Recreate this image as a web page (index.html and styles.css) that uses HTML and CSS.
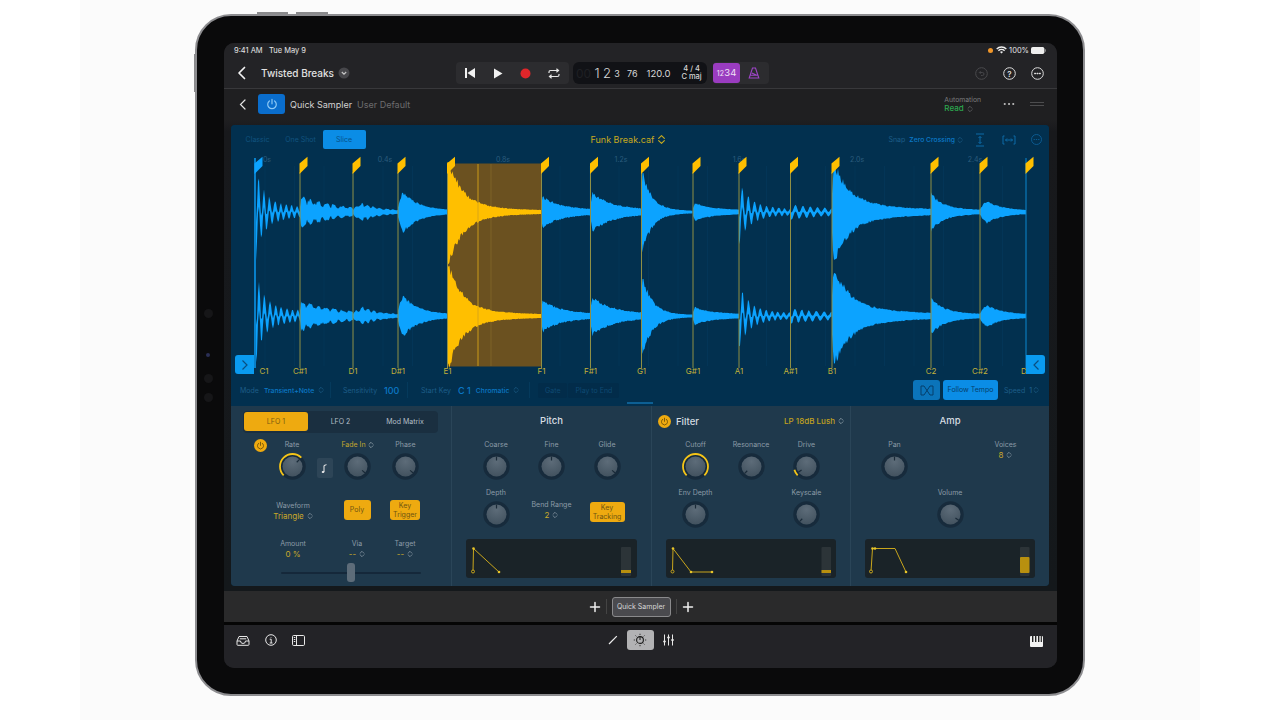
FILE: index.html
```html
<!DOCTYPE html>
<html lang="en">
  <head>
    <meta charset="UTF-8" />
    <title>Quick Sampler</title>
    <link rel="stylesheet" href="styles.css">
  </head>
  <body>
    <svg class="defs" width="0" height="0">
      <defs>
        <radialGradient id="face" cx="50%" cy="25%" r="85%">
          <stop offset="0" stop-color="#5d6c79" />
          <stop offset="1" stop-color="#3f4f5c" />
        </radialGradient>
        <symbol id="knob" viewBox="0 0 27 27">
          <circle cx="13.5" cy="13.5" r="12" fill="#172b3c" stroke="#172b3c" stroke-width="2.5" />
          <circle cx="13.5" cy="13.5" r="10" fill="url(#face)" />
        </symbol>
        <symbol id="power" viewBox="0 0 14 14">
          <path d="M4.4 3.9a4.3 4.3 0 1 0 5.2 0M7 2.4v4.4" fill="none" stroke="currentColor" stroke-width="1.2" stroke-linecap="round" />
        </symbol>
        <symbol id="updown" viewBox="0 0 8 10">
          <path d="M1.4 4 4 1.4 6.6 4M1.4 6 4 8.6 6.6 6" fill="none" stroke="currentColor" stroke-width="1" stroke-linecap="round" stroke-linejoin="round" />
        </symbol>
        <symbol id="plus" viewBox="0 0 12 12">
          <path d="M6 1.5v9M1.5 6h9" stroke="currentColor" stroke-width="1.5" stroke-linecap="round" />
        </symbol>
      </defs>
    </svg>

    <div class="stage">
      <div class="ipad">
        <i class="hw-btn hw-top-a"></i>
        <i class="hw-btn hw-top-b"></i>
        <i class="hw-btn hw-side"></i>
        <i class="cam cam-a"></i>
        <i class="cam cam-b"></i>
        <i class="cam cam-c"></i>
        <i class="cam cam-d"></i>

        <div class="screen">
          <div class="statusbar">
            <span>9:41 AM&nbsp;&nbsp; Tue May 9</span>
            <span class="status-right">
              <i class="dot"></i>
              <svg width="11" height="8" viewBox="0 0 11 8"><path d="M5.5 7.6 7 6a2.2 2.2 0 0 0-3 0zM2.9 5.2a3.7 3.7 0 0 1 5.2 0l1-1a5.1 5.1 0 0 0-7.2 0zM1.2 3.4a6.1 6.1 0 0 1 8.6 0l1-1a7.5 7.5 0 0 0-10.6 0z" fill="#eee" /></svg>
              <span>100%</span>
              <svg width="15" height="7" viewBox="0 0 15 7"><rect width="13.4" height="7" rx="1.8" fill="#eee" /><rect x="13.8" y="2.3" width="1" height="2.4" fill="#999" /></svg>
            </span>
          </div>

          <div class="toolbar">
            <svg class="back" width="10" height="14" viewBox="0 0 10 14"><path d="M7.5 1.5 2 7l5.5 5.5" fill="none" stroke="#f2f2f2" stroke-width="1.7" stroke-linecap="round" stroke-linejoin="round" /></svg>
            <span class="song">Twisted Breaks</span>
            <svg class="song-more" width="12" height="12" viewBox="0 0 12 12"><circle cx="6" cy="6" r="5.5" fill="#47474b" /><path d="M3.8 5 6 7.2 8.2 5" fill="none" stroke="#c8c8c8" stroke-width="1.1" /></svg>

            <div class="transport">
              <svg width="12" height="10" viewBox="0 0 12 10"><path d="M1 0h2v10H1zM11 0v10L3.4 5z" fill="#f2f2f2" /></svg>
              <svg width="10" height="11" viewBox="0 0 10 11"><path d="M1 0.5v10l8.5-5z" fill="#f2f2f2" /></svg>
              <svg width="11" height="11" viewBox="0 0 11 11"><circle cx="5.5" cy="5.5" r="5" fill="#e0262a" /></svg>
              <svg width="12" height="11" viewBox="0 0 12 11"><path d="M1 5V4a1.5 1.5 0 0 1 1.5-1.500H10M8.400.8 10.500 2.500 8.400 4.200M11 6v1a1.500 1.500 0 0 1-1.500 1.500H2M3.600 6.800 1.500 8.500l2.100 1.700" fill="none" stroke="#e6e6e6" stroke-width="1.200" /></svg>
            </div>

            <div class="lcd">
              <span class="lcd-off">00</span>
              <span class="lcd-big">1</span>
              <span class="lcd-big">2</span>
              <span class="lcd-small">3</span>
              <span class="lcd-num lcd-76">76</span>
              <span class="lcd-num lcd-tempo">120.0</span>
              <span class="lcd-sig"><b>4 / 4</b><b>C maj</b></span>
            </div>

            <div class="count">
              <span class="count-on"><small>12</small>34</span>
              <svg class="metro" width="12" height="12" viewBox="0 0 12 12"><path d="M4.500 1h3L10.800 11H1.200zM2.400 8.300h7.200M3.800 6 8.800 8.300" fill="none" stroke="#9d45c7" stroke-width="1.100" /></svg>
            </div>

            <div class="tool-right">
              <svg width="13" height="13" viewBox="0 0 13 13"><circle cx="6.500" cy="6.500" r="5.800" fill="none" stroke="#4a4a4d" /><path d="M4.500 5.500h3a1.500 1.500 0 0 1 0 3H6M5.600 4.200 4.300 5.500l1.300 1.300" fill="none" stroke="#4a4a4d" stroke-width=".9" /></svg>
              <svg width="13" height="13" viewBox="0 0 13 13"><circle cx="6.500" cy="6.500" r="5.800" fill="none" stroke="#ddd" /><text x="6.500" y="9.500" class="svg-q">?</text></svg>
              <svg width="13" height="13" viewBox="0 0 13 13"><circle cx="6.500" cy="6.500" r="5.800" fill="none" stroke="#ddd" /><path d="M3.700 6.500h.8M6.100 6.500h.8M8.500 6.500h.8" stroke="#ddd" stroke-width="1.300" stroke-linecap="round" /></svg>
            </div>
          </div>

          <div class="plug-head">
            <svg class="plug-back" width="8" height="11" viewBox="0 0 8 11"><path d="M6 1 1.500 5.500 6 10" fill="none" stroke="#e4e4e4" stroke-width="1.200" stroke-linecap="round" /></svg>
            <span class="plug-power"><svg width="14" height="14"><use href="#power" /></svg></span>
            <span class="plug-name">Quick Sampler</span>
            <span class="plug-preset">User Default</span>
            <div class="automation">
              <span>Automation</span>
              <span class="auto-read">Read <svg width="6" height="8"><use href="#updown" /></svg></span>
            </div>
            <svg class="plug-more" width="12" height="4" viewBox="0 0 12 4"><path d="M1.500 2h.5M5.800 2h.5M10 2h.5" stroke="#eee" stroke-width="1.600" stroke-linecap="round" /></svg>
            <span class="plug-grip"></span>
          </div>

          <div class="plugin-wrap">
            <div class="plugin">
              <div class="wave-section">
                <div class="wave-top">
                  <span class="seg">Classic</span>
                  <span class="seg">One Shot</span>
                  <span class="seg seg-on">Slice</span>
                  <span class="file">Funk Break.caf <svg width="9" height="11"><use href="#updown" /></svg></span>
                  <div class="wave-tools">
                    <span class="dim">Snap</span>
                    <span class="blue">Zero Crossing</span>
                    <svg class="dim" width="6" height="8"><use href="#updown" /></svg>
                    <svg class="tool-fit" width="12" height="14" viewBox="0 0 12 14"><path d="M2 1h8M2 13h8M6 3.500v7M4.500 5 6 3.500 7.500 5M4.500 9 6 10.500 7.500 9" fill="none" stroke="#0d6ba8" stroke-width="1" /></svg>
                    <svg class="tool-zoom" width="14" height="10" viewBox="0 0 14 10"><path d="M2.500 1H1v8h1.500M11.500 1H13v8h-1.500M3.500 5h7M5 3.500 3.500 5 5 6.500M9 3.500 10.500 5 9 6.500" fill="none" stroke="#0d6ba8" stroke-width="1" /></svg>
                    <svg class="tool-more" width="11" height="11" viewBox="0 0 11 11"><circle cx="5.500" cy="5.500" r="5" fill="none" stroke="#0c5a90" /><path d="M3 5.500h.5M5.250 5.500h.5M7.500 5.500H8" stroke="#0c5a90" stroke-linecap="round" /></svg>
                  </div>
                </div>

                <div class="wave-canvas">
                  <svg id="wave" class="wave" width="818" height="224" viewBox="231 154 818 224"></svg>
                  <span class="handle handle-l"><svg width="8" height="12" viewBox="0 0 8 12"><path d="M1.500 1.500 6 6l-4.500 4.500" fill="none" stroke="#0a4f80" stroke-width="1.200" /></svg></span>
                  <span class="handle handle-r"><svg width="8" height="12" viewBox="0 0 8 12"><path d="M6.500 1.500 2 6l4.500 4.500" fill="none" stroke="#0a4f80" stroke-width="1.200" /></svg></span>
                </div>

                <div class="wave-opts">
                  <div class="opt opt-mode"><span class="dim">Mode</span><span class="blue">Transient+Note</span><svg class="dim" width="6" height="8"><use href="#updown" /></svg></div>
                  <div class="opt opt-sens"><span class="dim">Sensitivity</span><span class="blue big">100</span></div>
                  <div class="opt opt-key"><span class="dim">Start Key</span><span class="blue big">C 1</span><span class="blue chrom">Chromatic</span><svg class="dim" width="6" height="8"><use href="#updown" /></svg></div>
                  <div class="opt opt-gate"><span class="off-btn">Gate</span><span class="off-btn">Play to End</span></div>
                  <div class="opt-right">
                    <span class="tempo-icon"><svg width="14" height="11" viewBox="0 0 14 11"><path d="M4 1H1v9h3L10 1h3v9h-3z" fill="none" stroke="#063f6a" stroke-width="1" /></svg></span>
                    <span class="tempo-btn">Follow Tempo</span>
                    <span class="dim speed">Speed <b>1</b></span>
                    <svg class="dim" width="6" height="8"><use href="#updown" /></svg>
                  </div>
                </div>
                <div class="wave-scroll"><i></i></div>
              </div>

              <div class="lower">
                <section class="sec sec-lfo">
                  <div class="tabs">
                    <span class="tab tab-on">LFO 1</span>
                    <span class="tab">LFO 2</span>
                    <span class="tab">Mod Matrix</span>
                  </div>
                  <div class="lfo-row1">
                    <svg class="pow-small" width="13" height="13"><circle cx="6.500" cy="6.500" r="6.500" fill="#eeaa10" /><use href="#power" x="1.500" y="1.500" width="10" height="10" class="pow-glyph" /></svg>
                    <div class="cell">
                      <span class="lbl">Rate</span>
                      <svg class="knob" viewBox="0 0 27 27"><use href="#knob" /><path class="arc" d="M4.660 22.340A12.500 12.500 0 0 1 22.340 4.660" /><path class="tick" transform="rotate(45 13.500 13.500)" d="M13.500 3.500v4" /></svg>
                    </div>
                    <span class="note-btn"><svg width="8" height="11" viewBox="0 0 8 11"><path d="M3 9V2.500l2.500-.8" fill="none" stroke="#eee" /><ellipse cx="2" cy="9" rx="1.300" ry="1" fill="#eee" /></svg></span>
                    <div class="cell">
                      <span class="lbl lbl-gold">Fade In <svg class="lbl-ud" width="6" height="8"><use href="#updown" /></svg></span>
                      <svg class="knob" viewBox="0 0 27 27"><use href="#knob" /><path class="tick" transform="rotate(130 13.500 13.500)" d="M13.500 3.500v4" /></svg>
                    </div>
                    <div class="cell">
                      <span class="lbl">Phase</span>
                      <svg class="knob" viewBox="0 0 27 27"><use href="#knob" /><path class="tick" transform="rotate(130 13.500 13.500)" d="M13.500 3.500v4" /></svg>
                    </div>
                  </div>
                  <div class="lfo-row2">
                    <div class="pick pick-wave"><span class="lbl">Waveform</span><span class="val">Triangle <svg width="6" height="8"><use href="#updown" /></svg></span></div>
                    <div class="col-b"><span class="gold-btn gold-poly">Poly</span></div>
                    <div class="col-c"><span class="gold-btn gold-trig">Key<br>Trigger</span></div>
                  </div>
                  <div class="lfo-row3">
                    <div class="pick pick-amount"><span class="lbl">Amount</span><span class="val">0 %</span></div>
                    <div class="pick col-b"><span class="lbl">Via</span><span class="val">-- <svg width="6" height="8"><use href="#updown" /></svg></span></div>
                    <div class="pick col-c"><span class="lbl">Target</span><span class="val">-- <svg width="6" height="8"><use href="#updown" /></svg></span></div>
                  </div>
                  <div class="slider"><i></i></div>
                </section>

                <section class="sec">
                  <h3 class="sec-title">Pitch</h3>
                  <div class="knob-grid">
                    <div class="cell"><span class="lbl">Coarse</span><svg class="knob" viewBox="0 0 27 27"><use href="#knob" /><path class="tick" d="M13.500 3.500v4" /></svg></div>
                    <div class="cell"><span class="lbl">Fine</span><svg class="knob" viewBox="0 0 27 27"><use href="#knob" /><path class="tick" d="M13.500 3.500v4" /></svg></div>
                    <div class="cell"><span class="lbl">Glide</span><svg class="knob" viewBox="0 0 27 27"><use href="#knob" /><path class="tick" transform="rotate(130 13.500 13.500)" d="M13.500 3.500v4" /></svg></div>
                    <div class="cell"><span class="lbl">Depth</span><svg class="knob" viewBox="0 0 27 27"><use href="#knob" /><path class="tick" d="M13.500 3.500v4" /></svg></div>
                    <div class="pick pick-bend"><span class="lbl">Bend Range</span><span class="val">2 <svg width="6" height="8"><use href="#updown" /></svg></span></div>
                    <span class="gold-btn gold-track">Key<br>Tracking</span>
                  </div>
                  <svg class="env" width="171" height="39" viewBox="0 0 171 39">
                    <path class="env-line" d="M7 32.500 7.500 9.500 33 33" />
                    <circle class="env-hollow" cx="7" cy="32.500" r="1.500" /><circle class="env-dot" cx="7.500" cy="9.500" r="1.300" /><circle class="env-dot" cx="33" cy="33" r="1.300" />
                    <rect class="env-meter" x="155" y="8" width="10" height="29" rx="1" /><rect class="env-level" x="155" y="31" width="10" height="3" />
                  </svg>
                </section>

                <section class="sec">
                  <div class="filter-head">
                    <svg class="pow-small" width="13" height="13"><circle cx="6.500" cy="6.500" r="6.500" fill="#eeaa10" /><use href="#power" x="1.500" y="1.500" width="10" height="10" class="pow-glyph" /></svg>
                    <span class="filter-title">Filter</span>
                    <span class="filter-type">LP 18dB Lush <svg width="6" height="8"><use href="#updown" /></svg></span>
                  </div>
                  <div class="knob-grid">
                    <div class="cell"><span class="lbl">Cutoff</span><svg class="knob" viewBox="0 0 27 27"><use href="#knob" /><path class="arc" d="M4.660 22.340A12.500 12.500 0 1 1 22.340 22.340" /></svg></div>
                    <div class="cell"><span class="lbl">Resonance</span><svg class="knob" viewBox="0 0 27 27"><use href="#knob" /><path class="tick" transform="rotate(-135 13.500 13.500)" d="M13.500 3.500v4" /></svg></div>
                    <div class="cell"><span class="lbl">Drive</span><svg class="knob" viewBox="0 0 27 27"><use href="#knob" /><path class="arc" d="M4.660 22.340A12.500 12.500 0 0 1 1.430 16.740" /><path class="tick" transform="rotate(-125 13.500 13.500)" d="M13.500 3.500v4" /></svg></div>
                    <div class="cell"><span class="lbl">Env Depth</span><svg class="knob" viewBox="0 0 27 27"><use href="#knob" /><path class="tick" d="M13.500 3.500v4" /></svg></div>
                    <span></span>
                    <div class="cell"><span class="lbl">Keyscale</span><svg class="knob" viewBox="0 0 27 27"><use href="#knob" /><path class="tick" transform="rotate(-135 13.500 13.500)" d="M13.500 3.500v4" /></svg></div>
                  </div>
                  <svg class="env" width="170" height="39" viewBox="0 0 170 39">
                    <path class="env-line" d="M6.500 32.500 7 9.500 25 33H46" />
                    <circle class="env-hollow" cx="6.500" cy="32.500" r="1.500" /><circle class="env-dot" cx="7" cy="9.500" r="1.300" /><circle class="env-dot" cx="25" cy="33" r="1.300" /><circle class="env-dot" cx="46" cy="33" r="1.300" />
                    <rect class="env-meter" x="155.500" y="8" width="9.500" height="29" rx="1" /><rect class="env-level" x="155.500" y="31" width="9.500" height="3" />
                  </svg>
                </section>

                <section class="sec">
                  <h3 class="sec-title">Amp</h3>
                  <div class="knob-grid">
                    <div class="cell"><span class="lbl">Pan</span><svg class="knob" viewBox="0 0 27 27"><use href="#knob" /><path class="tick" d="M13.500 3.500v4" /></svg></div>
                    <span></span>
                    <div class="pick pick-voices"><span class="lbl">Voices</span><span class="val">8 <svg width="6" height="8"><use href="#updown" /></svg></span></div>
                    <span></span>
                    <div class="cell"><span class="lbl">Volume</span><svg class="knob" viewBox="0 0 27 27"><use href="#knob" /><path class="tick" transform="rotate(125 13.500 13.500)" d="M13.500 3.500v4" /></svg></div>
                  </div>
                  <svg class="env" width="170" height="39" viewBox="0 0 170 39">
                    <path class="env-line" d="M6 32.500 7.500 9.500H30L41 33" />
                    <circle class="env-hollow" cx="6" cy="32.500" r="1.500" /><circle class="env-dot" cx="7.500" cy="9.500" r="1.300" /><circle class="env-dot" cx="10" cy="9.500" r="1.300" /><circle class="env-dot" cx="41" cy="33" r="1.300" />
                    <rect class="env-meter" x="155" y="8" width="9.500" height="29" rx="1" /><rect class="env-amp" x="155" y="18" width="9.500" height="16" rx="1" />
                  </svg>
                </section>
              </div>
            </div>
          </div>

          <div class="strip">
            <svg class="strip-plus" width="12" height="12"><use href="#plus" /></svg>
            <i class="strip-sep"></i>
            <span class="slot">Quick Sampler</span>
            <i class="strip-sep"></i>
            <svg class="strip-plus" width="12" height="12"><use href="#plus" /></svg>
          </div>

          <div class="bottombar">
            <div class="bb-left">
              <svg width="14" height="11" viewBox="0 0 14 11"><path d="M1 6 3 1.500h8L13 6v3.500a.8.8 0 0 1-.8.800H1.800a.8.8 0 0 1-.8-.800zM1 6h3.500a2.500 2.500 0 0 0 5 0H13M3.800 3.800h6.400" fill="none" stroke="#e8e8e8" stroke-width="1" /></svg>
              <svg width="12" height="12" viewBox="0 0 12 12"><circle cx="6" cy="6" r="5.300" fill="none" stroke="#e8e8e8" /><path d="M4.700 5.200H6.200V9M4.700 9H7.500M6 3v.6" fill="none" stroke="#e8e8e8" /></svg>
              <svg width="13" height="11" viewBox="0 0 13 11"><rect x=".5" y=".5" width="12" height="10" rx="1.200" fill="none" stroke="#e8e8e8" /><path d="M4.500 .5v10" stroke="#e8e8e8" /><path d="M1.800 2.500h1.500M1.800 4.500h1.500M1.800 6.500h1.500" stroke="#e8e8e8" /></svg>
            </div>
            <div class="bb-mid">
              <svg class="bb-pen" width="10" height="10" viewBox="0 0 10 10"><path d="M1 9 8.800 1.200" stroke="#eee" stroke-width="1.200" /></svg>
              <span class="bb-active"><svg width="14" height="14" viewBox="0 0 14 14"><circle cx="7" cy="7" r="3.400" fill="none" stroke="#1a1a1a" stroke-width="1.100" /><path d="M7 7V3.500M7 .8v1M7 12.200v1M.8 7h1M12.200 7h1M2.600 2.600l.7.700M10.700 10.700l.7.700M2.600 11.400l.7-.7M10.700 3.300l.7-.7" stroke="#1a1a1a" stroke-width="1" /></svg></span>
              <svg class="bb-mix" width="11" height="12" viewBox="0 0 11 12"><path d="M1.500 .5v11M5.500 .5v11M9.500 .5v11" stroke="#e8e8e8" /><path d="M.2 7.500h2.600M4.200 3.500h2.600M8.200 6h2.600" stroke="#e8e8e8" stroke-width="1.600" /></svg>
            </div>
            <svg class="bb-piano" width="13" height="11" viewBox="0 0 13 11"><rect width="13" height="11" rx="1" fill="#f2f2f2" /><path d="M2 0h1.400v6H2zM5 0h1.400v6H5zM8 0h1.400v6H8zM10.700 0h1.200v6h-1.200z" fill="#222" /></svg>
          </div>
        </div>
      </div>
    </div>
    <script src="app.js"></script>
  </body>
</html>
```

FILE: styles.css
```css
* {
  margin: 0;
  padding: 0;
  box-sizing: border-box;
}
body {
  background: #fff;
  font-family: Inter, "Noto Sans", sans-serif;
  overflow: hidden;
}
svg {
  display: block;
}
i {
  display: block;
}
.defs {
  position: absolute;
}
.stage {
  width: 1120px;
  height: 720px;
  margin: 0 auto;
  padding: 14px 0 0 115px;
  background: #fbfbfb;
}
.ipad {
  position: relative;
  width: 890px;
  height: 682px;
  padding: 27px;
  border: 2px solid #8d8d90;
  border-radius: 36px;
  background: #0a0a0b;
}
.hw-btn {
  position: absolute;
  background: #8a8a8c;
}
.hw-top-a {
  top: -4px;
  left: 60px;
  width: 31px;
  height: 2px;
}
.hw-top-b {
  top: -4px;
  left: 99px;
  width: 32px;
  height: 2px;
}
.hw-side {
  top: 38px;
  left: -3px;
  width: 1px;
  height: 38px;
}
.cam {
  position: absolute;
  left: 7px;
  width: 9px;
  height: 9px;
  border-radius: 50%;
  background: #161618;
}
.cam-a { top: 293px; }
.cam-b { top: 337px; left: 9px; width: 4px; height: 4px; background: #2a2f55; }
.cam-c { top: 358px; }
.cam-d { top: 377px; }

.screen {
  display: flex;
  flex-direction: column;
  width: 833px;
  height: 625px;
  border-radius: 10px;
  overflow: hidden;
  background: #1f1f21;
  color: #ddd;
}

/* status + top bars */
.statusbar {
  display: flex;
  justify-content: space-between;
  align-items: center;
  height: 17px;
  padding: 0 11px 3px 10px;
  font-size: 7.5px;
  color: #e6e6e6;
  background: #232326;
}
.status-right {
  display: flex;
  align-items: center;
  gap: 2px;
}
.dot {
  width: 5px;
  height: 5px;
  margin-right: 1px;
  border-radius: 50%;
  background: #f0962a;
}
.toolbar {
  display: flex;
  align-items: center;
  height: 29px;
  padding-bottom: 2px;
  border-bottom: 1px solid #38383b;
  background: #232326;
}
.back {
  margin-left: 13px;
}
.song {
  width: 73px;
  margin-left: 14px;
  font-size: 10px;
  font-weight: 500;
  white-space: nowrap;
  color: #e0e0e0;
}
.song-more {
  margin-left: 4px;
}
.transport {
  display: flex;
  justify-content: space-between;
  align-items: center;
  width: 113px;
  height: 22px;
  margin-left: 106px;
  padding: 0 9px 0 8px;
  border-radius: 4px;
  background: #2c2c2f;
}
.lcd {
  display: flex;
  align-items: center;
  width: 134px;
  height: 22px;
  margin-left: 4px;
  padding-left: 3px;
  border-radius: 6px;
  background: #111216;
  color: #d8d8d8;
}
.lcd-off {
  width: 16px;
  font-size: 12px;
  color: #1f2024;
}
.lcd-big {
  width: 10px;
  font-size: 13px;
  font-weight: 300;
  text-align: center;
}
.lcd-small {
  width: 10px;
  font-size: 9px;
  text-align: center;
}
.lcd-num {
  font-size: 9px;
}
.lcd-76 {
  margin-left: 5px;
}
.lcd-tempo {
  margin-left: 9px;
  font-size: 9.5px;
}
.lcd-sig {
  display: flex;
  flex-direction: column;
  align-items: center;
  margin-left: 11px;
  font-size: 7.5px;
  line-height: 8px;
}
.lcd-sig b {
  font-weight: 500;
}
.count {
  display: flex;
  align-items: center;
  width: 56px;
  height: 22px;
  margin-left: 6px;
  border-radius: 4px;
  background: #2c2c2f;
}
.count-on {
  display: flex;
  align-items: baseline;
  justify-content: center;
  width: 27px;
  height: 20px;
  line-height: 20px;
  border-radius: 3px;
  font-size: 9.5px;
  background: #9a3cc0;
  color: #f0e0f6;
}
.count-on small {
  font-size: 7px;
  letter-spacing: .3px;
}
.metro {
  margin-left: 8px;
}
.tool-right {
  display: flex;
  gap: 15px;
  margin-left: auto;
  margin-right: 13px;
}
.svg-q {
  font-size: 8px;
  font-weight: 600;
  text-anchor: middle;
  fill: #ddd;
}
.plug-head {
  display: flex;
  align-items: center;
  height: 31px;
  padding-bottom: 1px;
  background: #1f1f21;
}
.plug-back {
  margin-left: 15px;
}
.plug-power {
  display: flex;
  align-items: center;
  justify-content: center;
  width: 27px;
  height: 20px;
  margin-left: 11px;
  border-radius: 3px;
  color: #8cc8f5;
  background: #0a6dcc;
}
.plug-name {
  margin-left: 5px;
  font-size: 9px;
  color: #d2d2d2;
}
.plug-preset {
  margin-left: 5px;
  font-size: 9px;
  color: #6c6c6e;
}
.automation {
  display: flex;
  flex-direction: column;
  margin: 0 1px 0 auto;
  font-size: 6.8px;
  line-height: 9px;
  color: #7c7c7e;
}
.auto-read {
  display: flex;
  align-items: center;
  gap: 3px;
  font-size: 8px;
  font-weight: 500;
  color: #2ca64f;
}
.auto-read svg {
  color: #6a6a6c;
}
.plug-more {
  margin-left: 21px;
}
.plug-grip {
  width: 14px;
  height: 4px;
  margin: 0 13px 0 15px;
  border-top: 1px solid #4c4c4e;
  border-bottom: 1px solid #4c4c4e;
}

/* plugin panel */
.plugin-wrap {
  padding: 5px 8px 5px 7px;
  background: linear-gradient(#1f1f21, #18191c 12px, #14181b);
}
.plugin {
  height: 461px;
  border-radius: 4px;
  overflow: hidden;
  background: #02304f;
}
.wave-section {
  height: 281px;
  font-size: 7px;
  background: #02304f;
}
.wave-top {
  display: flex;
  align-items: flex-start;
  height: 29px;
  padding: 5px 0 0 5px;
}
.seg {
  width: 43px;
  height: 19px;
  line-height: 19px;
  text-align: center;
  color: #11537f;
}
.seg-on {
  margin-left: .5px;
  border-radius: 2px;
  color: #06528a;
  background: #0b8de6;
}
.file {
  display: flex;
  align-items: center;
  gap: 3px;
  height: 19px;
  margin-left: 225px;
  font-size: 9px;
  color: #c8aa1e;
}
.wave-tools {
  display: flex;
  align-items: center;
  height: 19px;
  margin-left: auto;
  padding-right: 7px;
}
.dim {
  color: #1d5d88;
}
.blue {
  font-size: 6.8px;
  font-weight: 500;
  color: #0b78c6;
}
.wave-tools .blue {
  margin-left: 4px;
}
.wave-tools svg.dim {
  margin-left: 2px;
}
.tool-fit {
  margin-left: 11px;
}
.tool-zoom {
  margin-left: 16px;
}
.tool-more {
  margin-left: 15px;
}
.wave-canvas {
  position: relative;
  height: 224px;
}
.wave text {
  font-family: Inter, "Noto Sans", sans-serif;
  text-anchor: middle;
}
.note {
  font-size: 8px;
  fill: #c2b03a;
}
.ruler {
  font-size: 7px;
  fill: #2b5c7d;
}
.handle {
  position: absolute;
  top: 201px;
  display: flex;
  align-items: center;
  justify-content: center;
  width: 19px;
  height: 19px;
  background: #0a9bf0;
}
.handle-l {
  left: 4px;
  border-radius: 3px 0 0 3px;
}
.handle-r {
  right: 4px;
  border-radius: 0 3px 3px 0;
}
.wave-opts {
  display: flex;
  align-items: center;
  height: 24px;
}
.opt {
  display: flex;
  align-items: center;
  height: 16px;
  border-right: 1px solid #053a5c;
}
.opt-mode {
  width: 100px;
  padding-left: 9px;
}
.opt-mode .blue {
  margin: 0 4px 0 5px;
}
.opt-sens {
  width: 77px;
  padding-left: 12px;
}
.big {
  font-size: 9px;
  margin-left: 7px;
}
.opt-key {
  width: 122px;
  padding-left: 13px;
}
.chrom {
  margin: 0 4px 0 5px;
}
.opt-gate {
  border: 0;
  gap: 1px;
  padding-left: 8px;
}
.off-btn {
  padding: 3px 7px;
  color: #0e4a73;
  background: #022c4a;
  border-radius: 2px;
  white-space: nowrap;
}
.opt-right {
  display: flex;
  align-items: center;
  margin-left: auto;
  padding-right: 10px;
}
.tempo-icon {
  display: flex;
  align-items: center;
  justify-content: center;
  width: 27px;
  height: 20px;
  border-radius: 3px;
  background: #0b74ba;
}
.tempo-btn {
  width: 55px;
  height: 20px;
  margin-left: 3px;
  line-height: 20px;
  text-align: center;
  border-radius: 3px;
  color: #063f6a;
  background: #0b8de6;
}
.speed {
  width: 29px;
  margin-left: 6px;
  white-space: nowrap;
}
.speed b {
  margin-left: 2px;
  font-weight: 500;
}
.wave-scroll {
  height: 4px;
}
.wave-scroll i {
  width: 26px;
  height: 2px;
  margin-left: 396px;
  background: #0d5f93;
}

/* lower panel */
.lower {
  display: grid;
  grid-template-columns: 220px 200px 199px 199px;
  height: 180px;
  background: #1f394c;
  font-size: 7px;
}
.sec {
  border-left: 1px solid #2a4558;
}
.sec:first-child {
  border-left: 0;
}
.lbl {
  display: block;
  height: 12px;
  line-height: 12px;
  white-space: nowrap;
  color: #8c9ba7;
}
.lbl-gold {
  display: flex;
  align-items: center;
  gap: 2px;
  color: #c2a62c;
}
.lbl-ud {
  color: #9aa8b2;
}
.val {
  display: flex;
  align-items: center;
  justify-content: center;
  gap: 3px;
  height: 11px;
  margin-top: -2px;
  font-size: 8px;
  color: #c9a92a;
}
.val svg {
  color: #8c9ba7;
}
.cell {
  display: flex;
  flex-direction: column;
  align-items: center;
}
.pick {
  display: flex;
  flex-direction: column;
  align-items: center;
}
.knob {
  width: 27px;
  height: 27px;
  margin-top: 2px;
  overflow: visible;
}
.tick {
  fill: none;
  stroke: #1a2a38;
  stroke-width: 1.2;
}
.arc {
  fill: none;
  stroke: #f5c518;
  stroke-width: 1.8;
}
.gold-btn {
  display: block;
  height: 20px;
  border-radius: 3px;
  text-align: center;
  font-size: 7px;
  line-height: 8.5px;
  padding-top: 2px;
  color: #6e5410;
  background: #eeaa10;
}
.tabs {
  display: grid;
  grid-template-columns: 64px 65px 64px;
  width: 195px;
  height: 22px;
  margin: 5px 0 0 12px;
  padding: 1px;
  border-radius: 4px;
  background: #1a2f40;
}
.tab {
  line-height: 19px;
  height: 19px;
  text-align: center;
  color: #b4bfc7;
}
.tab-on {
  border-radius: 3px;
  color: #7a5c10;
  background: #eeaa10;
}
.lfo-row1 {
  display: grid;
  grid-template-columns: 14px 48px 18px 47px 49px;
  height: 42px;
  margin-top: 6px;
  padding-left: 23px;
}
.pow-small {
  color: #6a4e08;
}
.pow-glyph {
  color: #6a4e08;
}
.note-btn {
  display: flex;
  align-items: center;
  justify-content: center;
  align-self: end;
  width: 16px;
  height: 20px;
  margin: 0 0 3px 1px;
  border-radius: 2px;
  background: #2d4557;
}
.lfo-row2 {
  display: grid;
  grid-template-columns: 22px 80px 48px 48px;
  height: 20px;
  margin-top: 19px;
}
.lfo-row3 {
  display: grid;
  grid-template-columns: 22px 80px 48px 48px;
  height: 23px;
  margin-top: 18px;
}
.pick-wave,
.pick-amount {
  grid-column: 2;
}
.col-b,
.col-c {
  display: flex;
  flex-direction: column;
  align-items: center;
}
.gold-poly {
  width: 27px;
  line-height: 16px;
}
.gold-trig {
  width: 30px;
}
.slider {
  position: relative;
  width: 140px;
  height: 2px;
  margin: 11px 0 0 50px;
  border-radius: 1px;
  background: #15283a;
}
.slider i {
  position: absolute;
  top: -9px;
  left: 66px;
  width: 8px;
  height: 19px;
  border-radius: 3px;
  background: #5d6c79;
}
.sec-title {
  height: 33px;
  padding-top: 9px;
  font-size: 9.5px;
  font-weight: 500;
  line-height: 12px;
  text-align: center;
  color: #d6dde2;
}
.filter-head {
  display: flex;
  align-items: center;
  height: 30px;
  margin-bottom: 3px;
  padding: 0 6px 0 6px;
}
.filter-title {
  margin-left: 5px;
  font-size: 9.5px;
  font-weight: 500;
  color: #d6dde2;
}
.filter-type {
  display: flex;
  align-items: center;
  gap: 3px;
  margin-left: auto;
  font-size: 8px;
  font-weight: 500;
  color: #c2a21e;
}
.filter-type svg {
  color: #9aa8b2;
}
.knob-grid {
  display: grid;
  grid-template-columns: repeat(3, 55.5px);
  grid-template-rows: 42px 42px;
  row-gap: 6px;
  justify-content: center;
  height: 90px;
}
.pick-bend {
  align-self: center;
  margin-top: 3px;
}
.pick-voices {
  align-self: start;
}
.gold-track {
  align-self: end;
  justify-self: center;
  width: 35px;
  margin-bottom: 7px;
}
.env {
  margin: 10px 0 0 14px;
  border-radius: 3px;
  background: #1a2328;
}
.env-line {
  fill: none;
  stroke: #c9a61c;
  stroke-width: 1;
}
.env-dot {
  fill: #e8c52a;
}
.env-hollow {
  fill: #1a2328;
  stroke: #c9a61c;
}
.env-meter {
  fill: #2c3438;
}
.env-level {
  fill: #b8900f;
}
.env-amp {
  fill: #b8900f;
}

/* bottom strips */
.strip {
  display: flex;
  align-items: center;
  justify-content: center;
  gap: 5px;
  height: 34px;
  padding-left: 1px;
  border-bottom: 3px solid #050505;
  background: #2a2a2b;
}
.strip-plus {
  color: #f0f0f0;
}
.strip-sep {
  width: 1px;
  height: 15px;
  background: #444;
}
.slot {
  width: 59px;
  height: 20px;
  line-height: 18px;
  text-align: center;
  font-size: 7px;
  border: 1px solid #8a8a8c;
  border-radius: 3px;
  color: #d8d8d8;
  background: #4a4a4e;
}
.bottombar {
  display: grid;
  grid-template-columns: 1fr auto 1fr;
  align-items: start;
  height: 43px;
  padding-top: 5px;
  background: #232327;
}
.bb-left {
  display: flex;
  align-items: center;
  gap: 15px;
  height: 20px;
  padding-left: 12px;
}
.bb-mid {
  display: flex;
  align-items: center;
  height: 20px;
}
.bb-pen {
  margin-right: 9px;
}
.bb-active {
  display: flex;
  align-items: center;
  justify-content: center;
  width: 27px;
  height: 20px;
  border-radius: 3px;
  background: #b2b2b4;
}
.bb-mix {
  margin-left: 9px;
}
.bb-piano {
  justify-self: end;
  align-self: center;
  margin: 0 14px 16px 0;
}
```

FILE: app.js
```js
// waveform canvas: x/y here are the same numbers as the panel coordinates in viewBox
const svg = document.getElementById('wave');
const NS = 'http://www.w3.org/2000/svg';

let seed = 11;
function rnd() {
  seed = (seed * 16807) % 2147483647;
  return seed / 2147483647;
}

function add(tag, attrs, text) {
  const el = document.createElementNS(NS, tag);
  for (const k in attrs) el.setAttribute(k, attrs[k]);
  if (text) el.textContent = text;
  svg.appendChild(el);
  return el;
}

const BLUE = '#0ca3ff';
const GOLD = '#ffbf00';

const markers = [
  [255, 'C1', 264], [300, 'C#1'], [353, 'D1'], [398, 'D#1'], [447.5, 'E1'],
  [541.5, 'F1'], [590.5, 'F#1'], [641.5, 'G1'], [693, 'G#1'], [739, 'A1'],
  [790.5, 'A#1'], [832, 'B1'], [931, 'C2'], [980, 'C#2'], [1026, 'D', 1024]
];

// x0, x1, fast amp, fast decay, slow amp, slow decay, rise, osc period (0 = noise), lump width
const slices = [
  [256, 300, 36, 6, 15, 40, 1, 5.5, 0],
  [300, 353, 11, 34, 3, 60, 2, 0, 2.5],
  [353, 398, 13, 12, 3, 40, 12, 0, 2],
  [398, 447, 25, 15, 2, 60, 6, 0, 0],
  [447.5, 541.5, 50, 14, 6, 60, 1, 0, 0],
  [541.5, 590.5, 12, 16, 4, 60, 2, 0, 0],
  [590.5, 641.5, 16, 18, 4, 70, 3, 0, 0],
  [641.5, 693, 38, 9, 6, 20, 2, 0, 0],
  [693, 739, 7, 16, 2, 100, 3, 0, 0],
  [739, 790.5, 27, 10, 6, 60, 1, 6, 0],
  [790.5, 832, 4, 50, 3, 60, 1, 7.5, 0],
  [832, 931, 46, 15, 10, 70, 3, 0, 0],
  [931, 980, 15, 12, 3, 60, 1, 0, 0],
  [980, 1026, 14, 14, 2, 60, 8, 0, 0]
];

function slicePath(s, mid) {
  const [x0, x1, a, ta, b, tb, rise, period, lump] = s;
  const up = [];
  const down = [];
  let phase = 0;
  for (let x = x0; x <= x1; x += 1) {
    const d = x - x0;
    let amp = (a * Math.exp(-d / ta) + b * Math.exp(-d / tb)) * Math.min(1, (d + 1) / rise);
    if (lump) amp *= 0.55 + 0.6 * Math.abs(Math.sin(d / lump + rnd() * 0.8));
    let top;
    let bot;
    if (period) {
      phase += (2 * Math.PI) / (period * (0.85 + rnd() * 0.3));
      const c = amp * 0.6 * Math.sin(phase);
      const half = 1 + amp * 0.38;
      top = c - half * (0.85 + rnd() * 0.25);
      bot = c + half * (0.85 + rnd() * 0.25);
    } else {
      top = -amp * (0.84 + 0.24 * rnd()) - 0.8;
      bot = amp * (0.84 + 0.24 * rnd()) + 0.8;
    }
    up.push(x.toFixed(1) + ' ' + Math.max(mid + top, mid - 50).toFixed(1));
    down.unshift(x.toFixed(1) + ' ' + Math.min(mid + bot, mid + 52).toFixed(1));
  }
  return 'M' + up.concat(down).join('L') + 'Z';
}

// faint grid and time ruler
for (let x = 265; x < 1030; x += 29.5) {
  add('path', { d: 'M' + x + ' 166V366', stroke: '#05395c', 'stroke-width': 0.6 });
}
['0s', '0.4s', '0.8s', '1.2s', '1.6s', '2.0s', '2.4s'].forEach((t, i) => {
  add('text', { x: 267 + i * 118, y: 162, class: 'ruler' }, t);
});

// selected slice
add('rect', { x: 447.5, y: 163.5, width: 94, height: 203, fill: '#6b5120' });
add('path', { d: 'M491 164V366', stroke: '#84682a', 'stroke-width': 0.8 });

[212, 316].forEach((mid) => {
  slices.forEach((s, i) => {
    add('path', { d: slicePath(s, mid), fill: i === 4 ? GOLD : BLUE });
  });
});
add('path', { d: 'M478 164V366', stroke: '#d6a41a', 'stroke-width': 0.9 });

markers.forEach((m, i) => {
  const x = m[0];
  const first = i === 0;
  const last = i === markers.length - 1;
  const line = first ? BLUE : last ? '#0a86d0' : '#8f8f45';
  add('path', { d: 'M' + x + ' ' + (first || last ? 158 : 172) + 'V368', stroke: line, 'stroke-width': first ? 1.4 : 1 });
  add('path', {
    d: 'M' + (x - 0.5) + ' 163.5L' + (x + 7.5) + ' 156.7V166L' + (x - 0.5) + ' 174Z',
    fill: first ? BLUE : GOLD
  });
  add('text', { x: m[2] || x, y: 374, class: 'note' }, m[1]);
});
```
